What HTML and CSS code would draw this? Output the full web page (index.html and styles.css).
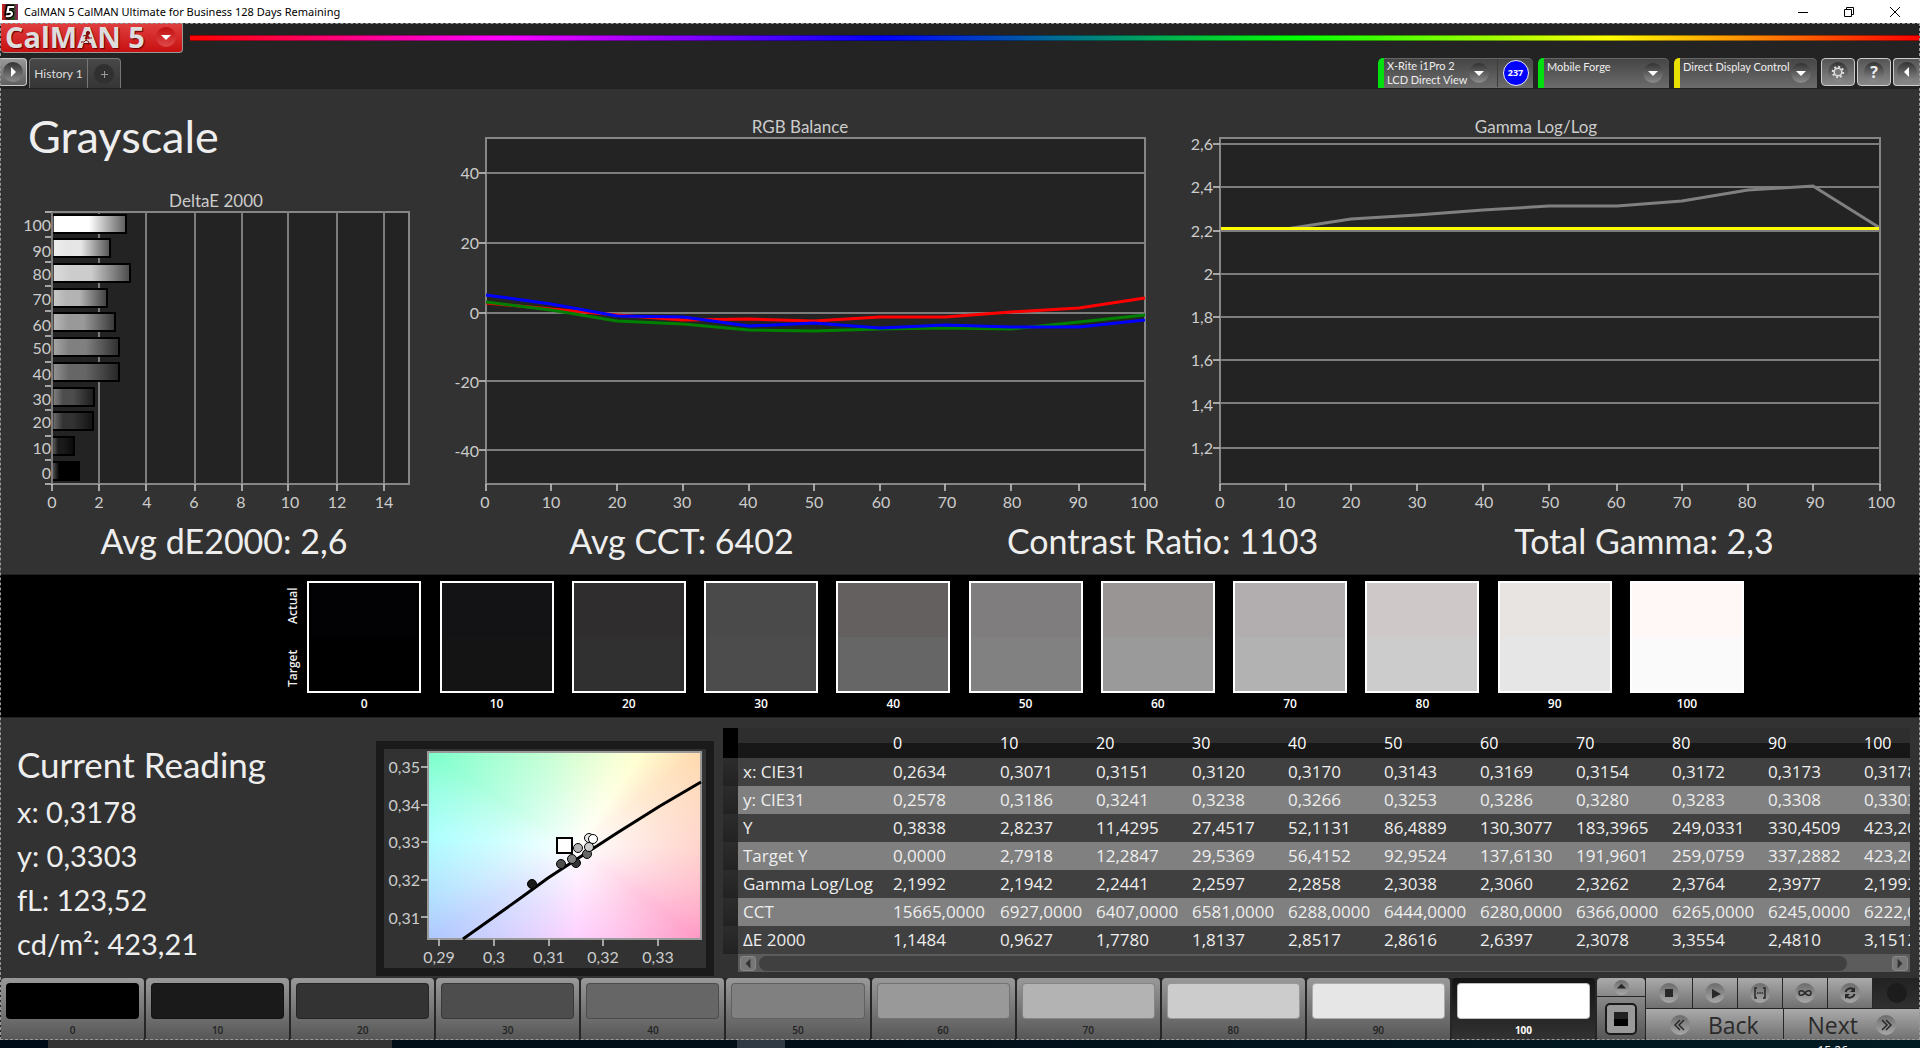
FILE: index.html
```html
<!DOCTYPE html>
<html lang="en">
<head>
<meta charset="utf-8">
<title>CalMAN 5 CalMAN Ultimate for Business 128 Days Remaining</title>
<link rel="stylesheet" href="styles.css">
</head>
<body>
<header class="titlebar">
  <svg class="titlebar-icon" viewBox="0 0 16 16" aria-hidden="true">
    <defs><linearGradient id="hue"><stop offset="0" stop-color="#e02020"/><stop offset=".35" stop-color="#402020"/><stop offset=".7" stop-color="#205020"/><stop offset="1" stop-color="#a02060"/></linearGradient></defs>
    <rect width="16" height="16" fill="url(#hue)"/>
    <path d="M12 3H6L5 8.500Q10 7 10 10Q9 13 4 12" fill="none" stroke="#000" stroke-width="4.500"/>
    <path d="M12 3H6.500L5.500 8Q10 7 10 10Q9 13 4 12" fill="none" stroke="#fff" stroke-width="2.200"/>
  </svg>
  <span class="titlebar-text">CalMAN 5 CalMAN Ultimate for Business 128 Days Remaining</span>
  <div class="window-buttons">
    <button type="button" aria-label="Minimize"><svg viewBox="0 0 12 12"><path d="M1 6.500h10"/></svg></button>
    <button type="button" aria-label="Restore"><svg viewBox="0 0 12 12"><path d="M1.500 3.500h7v7h-7zM3.500 3.500v-2h7v7h-2"/></svg></button>
    <button type="button" aria-label="Close"><svg viewBox="0 0 12 12"><path d="M1 1l10 10M11 1L1 11"/></svg></button>
  </div>
</header>

<main class="app">
  <div class="topbar">
    <div class="brand-row">
      <button type="button" class="brand" aria-label="CalMAN 5 menu">
        <span class="brand-text">CalM<span class="brand-a">A<svg class="runner" viewBox="0 0 12 14" aria-hidden="true"><circle cx="7" cy="2" r="1.600"/><path d="M2 5l4-1 2 3 3 0M6 5l-1 4 3 2-1 3M5 9l-2 2H0"/></svg></span>N 5</span>
        <span class="brand-drop"><svg viewBox="0 0 20 20" aria-hidden="true"><path d="M5 8h10l-5 5z"/></svg></span>
      </button>
      <div class="rainbow"></div>
    </div>
    <div class="tool-row">
      <button type="button" class="square-btn edge-left" aria-label="Show panel"><svg viewBox="0 0 20 20"><circle cx="10" cy="10" r="10"/><path class="glyph" d="M8 5l5 5-5 5z"/></svg></button>
      <nav class="tabs">
        <button type="button" class="tab">History 1</button>
        <button type="button" class="tab tab-add" aria-label="Add tab"><svg viewBox="0 0 20 20"><circle cx="10" cy="10" r="10"/><path d="M7 10.500h7M10.500 7v7"/></svg></button>
      </nav>
      <div class="devices">
        <div class="device device-meter">
          <button type="button" class="device-name">X-Rite i1Pro 2<br>LCD Direct View</button>
          <svg class="drop" viewBox="0 0 20 20" aria-hidden="true"><circle cx="10" cy="10" r="10"/><path class="glyph" d="M5 8h10l-5 5z"/></svg>
          <span class="count-cell"><span class="count">237</span></span>
        </div>
        <div class="device device-source">
          <select aria-label="Source"><option>Mobile Forge</option></select>
          <svg class="drop" viewBox="0 0 20 20" aria-hidden="true"><circle cx="10" cy="10" r="10"/><path class="glyph" d="M5 8h10l-5 5z"/></svg>
        </div>
        <div class="device device-display">
          <select aria-label="Display"><option>Direct Display Control</option></select>
          <svg class="drop" viewBox="0 0 20 20" aria-hidden="true"><circle cx="10" cy="10" r="10"/><path class="glyph" d="M5 8h10l-5 5z"/></svg>
        </div>
        <button type="button" class="square-btn" aria-label="Settings"><svg viewBox="0 0 20 20"><circle cx="10" cy="10" r="10"/><circle cx="10" cy="10" r="5.200" class="cog-teeth"/><circle cx="10" cy="10" r="3.800" class="cog"/></svg></button>
        <button type="button" class="square-btn" aria-label="Help"><span class="help-mark">?</span></button>
        <button type="button" class="square-btn edge-right" aria-label="Collapse panel"><svg viewBox="0 0 20 20"><circle cx="10" cy="10" r="10"/><path class="glyph" d="M12 5l-5 5 5 5z"/></svg></button>
      </div>
    </div>
  </div>

  <section class="charts">
    <div class="chart-left">
      <h1>Grayscale</h1>
      <svg class="chart" viewBox="0 190 440 325" role="img" aria-label="DeltaE 2000">
        <defs>
          <linearGradient id="shade"><stop offset="0" stop-color="#fff" stop-opacity=".3"/><stop offset=".25" stop-color="#fff" stop-opacity="0"/><stop offset=".5" stop-color="#000" stop-opacity="0"/><stop offset="1" stop-color="#000" stop-opacity=".62"/></linearGradient>
        </defs>
        <text class="chart-title" x="216" y="207" text-anchor="middle">DeltaE 2000</text>
        <rect class="plot" x="52" y="212" width="357" height="272"/>
        <path class="grid" d="M99 212v272M146 212v272M195 212v272M242 212v272M288 212v272M337 212v272M384 212v272"/>
        <path class="tick" d="M52 484v7M99 484v7M146 484v7M195 484v7M242 484v7M288 484v7M337 484v7M384 484v7M45 212h7M45 237h7M45 262h7M45 286h7M45 311h7M45 336h7M45 362h7M45 386h7M45 410h7M45 436h7M45 460h7M45 484h7"/>
        <g class="bars">
          <rect x="53" y="215" width="73" height="18" fill="#fff"/><rect x="53" y="239" width="57" height="18" fill="#e6e6e6"/><rect x="53" y="264" width="77" height="18" fill="#ccc"/><rect x="53" y="289" width="54" height="18" fill="#b3b3b3"/><rect x="53" y="313" width="62" height="18" fill="#999"/><rect x="53" y="338" width="66" height="18" fill="#808080"/><rect x="53" y="363" width="66" height="18" fill="#666"/><rect x="53" y="388" width="41" height="18" fill="#4d4d4d"/><rect x="53" y="412" width="40" height="18" fill="#333"/><rect x="53" y="437" width="21" height="18" fill="#1a1a1a"/><rect x="53" y="462" width="26" height="18" fill="#000"/>
        </g>
        <g fill="url(#shade)">
          <rect x="53" y="216" width="72" height="16"/><rect x="53" y="240" width="56" height="16"/><rect x="53" y="265" width="76" height="16"/><rect x="53" y="290" width="53" height="16"/><rect x="53" y="314" width="61" height="16"/><rect x="53" y="339" width="65" height="16"/><rect x="53" y="364" width="65" height="16"/><rect x="53" y="389" width="40" height="16"/><rect x="53" y="413" width="39" height="16"/><rect x="53" y="438" width="20" height="16"/><rect x="53" y="463" width="25" height="16"/>
        </g>
        <path class="axis" d="M52 212v272"/>
        <g text-anchor="end">
          <text x="51" y="231">100</text><text x="51" y="257">90</text><text x="51" y="280">80</text><text x="51" y="305">70</text><text x="51" y="331">60</text><text x="51" y="354">50</text><text x="51" y="380">40</text><text x="51" y="405">30</text><text x="51" y="428">20</text><text x="51" y="454">10</text><text x="51" y="479">0</text>
        </g>
        <g text-anchor="middle">
          <text x="52" y="508">0</text><text x="99" y="508">2</text><text x="147" y="508">4</text><text x="194" y="508">6</text><text x="241" y="508">8</text><text x="290" y="508">10</text><text x="337" y="508">12</text><text x="384" y="508">14</text>
        </g>
      </svg>
    </div>
    <svg class="chart chart-wide" viewBox="440 115 740 400" role="img" aria-label="RGB Balance">
      <text class="chart-title" x="800" y="133" text-anchor="middle">RGB Balance</text>
      <rect class="plot" x="486" y="138" width="659" height="346"/>
      <path class="grid" d="M486 173h659M486 243h659M486 313h659M486 381h659M486 450h659"/>
      <path class="tick" d="M479 173h7M479 243h7M479 313h7M479 381h7M479 450h7M486 484v7M551 484v7M617 484v7M683 484v7M749 484v7M814 484v7M880 484v7M945 484v7M1011 484v7M1079 484v7M1145 484v7"/>
      <polyline class="line" stroke="#f00" points="486,303 551,309 617,315 683,320 749,319 814,321 880,317 945,317 1011,312 1079,308 1145,298"/>
      <polyline class="line" stroke="#008000" points="486,302 551,310 617,321 683,324 749,330 814,331 880,329 945,328 1011,329 1079,322 1145,315"/>
      <polyline class="line" stroke="#00f" points="486,295 551,304 617,316 683,317 749,326 814,323 880,328 945,325 1011,327 1079,327 1145,320"/>
      <g text-anchor="end">
        <text x="479" y="179">40</text><text x="479" y="249">20</text><text x="479" y="319">0</text><text x="479" y="388">-20</text><text x="479" y="457">-40</text>
      </g>
      <g text-anchor="middle">
        <text x="485" y="508">0</text><text x="551" y="508">10</text><text x="617" y="508">20</text><text x="682" y="508">30</text><text x="748" y="508">40</text><text x="814" y="508">50</text><text x="881" y="508">60</text><text x="947" y="508">70</text><text x="1012" y="508">80</text><text x="1078" y="508">90</text><text x="1144" y="508">100</text>
      </g>
    </svg>
    <svg class="chart chart-wide" viewBox="1180 115 740 400" role="img" aria-label="Gamma Log/Log">
      <text class="chart-title" x="1536" y="133" text-anchor="middle">Gamma Log/Log</text>
      <rect class="plot" x="1220" y="138" width="660" height="346"/>
      <path class="grid" d="M1220 144h660M1220 187h660M1220 231h660M1220 274h660M1220 317h660M1220 360h660M1220 403h660M1220 448h660"/>
      <path class="tick" d="M1213 144h7M1213 187h7M1213 231h7M1213 274h7M1213 317h7M1213 360h7M1213 403h7M1213 448h7M1220 484v7M1286 484v7M1351 484v7M1417 484v7M1483 484v7M1549 484v7M1617 484v7M1682 484v7M1748 484v7M1813 484v7M1880 484v7"/>
      <polyline class="line" stroke="#808080" points="1220,230 1286,229 1351,219 1417,215 1483,210 1549,206 1617,206 1682,201 1748,190 1813,186 1880,228"/>
      <path class="line" stroke="#ff0" d="M1221 228.500h658"/>
      <g text-anchor="end">
        <text x="1213" y="150">2,6</text><text x="1213" y="193">2,4</text><text x="1213" y="237">2,2</text><text x="1213" y="280">2</text><text x="1213" y="323">1,8</text><text x="1213" y="366">1,6</text><text x="1213" y="411">1,4</text><text x="1213" y="454">1,2</text>
      </g>
      <g text-anchor="middle">
        <text x="1220" y="508">0</text><text x="1286" y="508">10</text><text x="1351" y="508">20</text><text x="1417" y="508">30</text><text x="1484" y="508">40</text><text x="1550" y="508">50</text><text x="1616" y="508">60</text><text x="1682" y="508">70</text><text x="1747" y="508">80</text><text x="1815" y="508">90</text><text x="1881" y="508">100</text>
      </g>
    </svg>
  </section>

  <section class="stats">
    <p>Avg dE2000: 2,6</p><p>Avg CCT: 6402</p><p>Contrast Ratio: 1103</p><p>Total Gamma: 2,3</p>
  </section>

  <section class="swatches">
    <div class="swatch-side"><span>Actual</span><span>Target</span></div>
    <figure><div class="patch p0"></div><figcaption>0</figcaption></figure>
    <figure><div class="patch p10"></div><figcaption>10</figcaption></figure>
    <figure><div class="patch p20"></div><figcaption>20</figcaption></figure>
    <figure><div class="patch p30"></div><figcaption>30</figcaption></figure>
    <figure><div class="patch p40"></div><figcaption>40</figcaption></figure>
    <figure><div class="patch p50"></div><figcaption>50</figcaption></figure>
    <figure><div class="patch p60"></div><figcaption>60</figcaption></figure>
    <figure><div class="patch p70"></div><figcaption>70</figcaption></figure>
    <figure><div class="patch p80"></div><figcaption>80</figcaption></figure>
    <figure><div class="patch p90"></div><figcaption>90</figcaption></figure>
    <figure><div class="patch p100"></div><figcaption>100</figcaption></figure>
  </section>

  <section class="details">
    <div class="reading">
      <h2>Current Reading</h2>
      <p>x: 0,3178</p><p>y: 0,3303</p><p>fL: 123,52</p><p>cd/m²: 423,21</p>
    </div>
    <div class="cie">
      <svg class="chart" viewBox="384 749 322 219" role="img" aria-label="CIE chromaticity">
        <foreignObject x="428" y="752" width="273" height="187"><div class="cie-field"></div></foreignObject>
        <rect class="frame" x="428" y="752" width="273" height="187"/>
        <path class="tick" d="M421 767h7M421 805h7M421 842h7M421 880h7M421 917h7M439 939v7M494 939v7M549 939v7M603 939v7M658 939v7"/>
        <polyline class="locus" points="463,939 494,917 522,897 548,878 577,859 617,833 660,806 701,782"/>
        <rect class="target" x="557" y="838" width="15" height="15"/>
        <g class="dots">
          <circle cx="532" cy="884" r="4.500" fill="#1a1a1a"/><circle cx="576" cy="863" r="4.500" fill="#333"/><circle cx="561" cy="864" r="4.500" fill="#4d4d4d"/><circle cx="587" cy="854" r="4.500" fill="#666"/><circle cx="572" cy="859" r="4.500" fill="#808080"/><circle cx="578" cy="848" r="4.500" fill="#b3b3b3"/><circle cx="589" cy="847" r="4.500" fill="#ccc"/><circle cx="589" cy="838" r="4.500" fill="#e6e6e6"/><circle cx="593" cy="839" r="4.500" fill="#fff"/>
        </g>
        <g text-anchor="end">
          <text x="420" y="773">0,35</text><text x="420" y="811">0,34</text><text x="420" y="848">0,33</text><text x="420" y="886">0,32</text><text x="420" y="924">0,31</text>
        </g>
        <g text-anchor="middle">
          <text x="439" y="963">0,29</text><text x="494" y="963">0,3</text><text x="549" y="963">0,31</text><text x="603" y="963">0,32</text><text x="658" y="963">0,33</text>
        </g>
      </svg>
    </div>
    <div class="readings">
      <div class="table-clip">
        <table>
          <colgroup><col class="c-gutter"><col class="c-name"><col class="c-first"><col span="10" class="c-value"></colgroup>
          <thead><tr><td></td><th></th><th>0</th><th>10</th><th>20</th><th>30</th><th>40</th><th>50</th><th>60</th><th>70</th><th>80</th><th>90</th><th>100</th></tr></thead>
          <tbody>
            <tr><td></td><th>x: CIE31</th><td>0,2634</td><td>0,3071</td><td>0,3151</td><td>0,3120</td><td>0,3170</td><td>0,3143</td><td>0,3169</td><td>0,3154</td><td>0,3172</td><td>0,3173</td><td>0,3178</td></tr>
            <tr><td></td><th>y: CIE31</th><td>0,2578</td><td>0,3186</td><td>0,3241</td><td>0,3238</td><td>0,3266</td><td>0,3253</td><td>0,3286</td><td>0,3280</td><td>0,3283</td><td>0,3308</td><td>0,3303</td></tr>
            <tr><td></td><th>Y</th><td>0,3838</td><td>2,8237</td><td>11,4295</td><td>27,4517</td><td>52,1131</td><td>86,4889</td><td>130,3077</td><td>183,3965</td><td>249,0331</td><td>330,4509</td><td>423,2082</td></tr>
            <tr><td></td><th>Target Y</th><td>0,0000</td><td>2,7918</td><td>12,2847</td><td>29,5369</td><td>56,4152</td><td>92,9524</td><td>137,6130</td><td>191,9601</td><td>259,0759</td><td>337,2882</td><td>423,2082</td></tr>
            <tr><td></td><th>Gamma Log/Log</th><td>2,1992</td><td>2,1942</td><td>2,2441</td><td>2,2597</td><td>2,2858</td><td>2,3038</td><td>2,3060</td><td>2,3262</td><td>2,3764</td><td>2,3977</td><td>2,1992</td></tr>
            <tr><td></td><th>CCT</th><td>15665,0000</td><td>6927,0000</td><td>6407,0000</td><td>6581,0000</td><td>6288,0000</td><td>6444,0000</td><td>6280,0000</td><td>6366,0000</td><td>6265,0000</td><td>6245,0000</td><td>6222,0000</td></tr>
            <tr><td></td><th>ΔE 2000</th><td>1,1484</td><td>0,9627</td><td>1,7780</td><td>1,8137</td><td>2,8517</td><td>2,8616</td><td>2,6397</td><td>2,3078</td><td>3,3554</td><td>2,4810</td><td>3,1512</td></tr>
          </tbody>
        </table>
      </div>
      <div class="scrollbar">
        <button type="button" aria-label="Scroll left"><svg viewBox="0 0 16 16"><path d="M11 2v12L5 8z"/></svg></button>
        <div class="scroll-track"><div class="scroll-thumb"></div></div>
        <button type="button" aria-label="Scroll right"><svg viewBox="0 0 16 16"><path d="M5 2v12l6-6z"/></svg></button>
      </div>
    </div>
  </section>

  <footer class="bottombar">
    <div class="levels">
      <button type="button"><span class="chip l0"></span>0</button>
      <button type="button"><span class="chip l10"></span>10</button>
      <button type="button"><span class="chip l20"></span>20</button>
      <button type="button"><span class="chip l30"></span>30</button>
      <button type="button"><span class="chip l40"></span>40</button>
      <button type="button"><span class="chip l50"></span>50</button>
      <button type="button"><span class="chip l60"></span>60</button>
      <button type="button"><span class="chip l70"></span>70</button>
      <button type="button"><span class="chip l80"></span>80</button>
      <button type="button"><span class="chip l90"></span>90</button>
      <button type="button" class="selected" aria-pressed="true"><span class="chip l100"></span>100</button>
    </div>
    <div class="pattern">
      <button type="button" class="pattern-up" aria-label="Expand patterns"><svg viewBox="0 0 20 20"><circle cx="10" cy="10" r="8"/><path class="ink" d="M5 11h10l-5-5z"/></svg></button>
      <button type="button" class="pattern-window" aria-label="Pattern window"><span></span></button>
    </div>
    <div class="controls">
      <div class="transport">
        <button type="button" aria-label="Stop"><svg viewBox="0 0 20 20"><circle cx="10" cy="10" r="10"/><path class="ink" d="M6 6h8v8H6z"/></svg></button>
        <button type="button" aria-label="Read"><svg viewBox="0 0 20 20"><circle cx="10" cy="10" r="10"/><path class="ink" d="M7 6l9 5-9 4.500z"/></svg></button>
        <button type="button" aria-label="Read series"><svg viewBox="0 0 20 20"><circle cx="10" cy="10" r="10"/><path class="pen" d="M7 5H5v10h2M13 5h2v10h-2M7 10h1.500M9.300 10h1.500M11.600 10h1.500"/></svg></button>
        <button type="button" aria-label="Read continuously"><svg viewBox="0 0 20 20"><circle cx="10" cy="10" r="10"/><path class="pen" d="M10 10C8.500 7.500 4 6.500 4 10s4.500 2.500 6 0 6-3.500 6 0-4.500 2.500-6 0"/></svg></button>
        <button type="button" aria-label="Refresh"><svg viewBox="0 0 20 20"><circle cx="10" cy="10" r="10"/><path class="pen thick" d="M5.500 9A5 5 0 0 1 13.500 6.500M14.500 11A5 5 0 0 1 6.500 13.500"/><path class="ink" d="M15 4v5h-5zM5 16v-5h5z"/></svg></button>
        <button type="button" class="off" aria-label="Status" disabled><svg viewBox="0 0 20 20"><circle cx="10" cy="10" r="10"/></svg></button>
      </div>
      <div class="steps">
        <button type="button"><svg viewBox="0 0 20 20" aria-hidden="true"><circle cx="10" cy="10" r="10"/><path class="pen" d="M10 5l-5 5 5 5M14 5l-5 5 5 5"/></svg>Back</button>
        <button type="button">Next<svg viewBox="0 0 20 20" aria-hidden="true"><circle cx="10" cy="10" r="10"/><path class="pen" d="M6 5l5 5-5 5M10 5l5 5-5 5"/></svg></button>
      </div>
    </div>
  </footer>
</main>
<div class="taskbar"><span class="clock">15:26</span></div>

<svg class="defs" aria-hidden="true"><defs>
  <linearGradient id="knobDark" x2="0" y2="1"><stop offset="0" stop-color="#333"/><stop offset="1" stop-color="#8c8c8c"/></linearGradient>
  <linearGradient id="knobLight" x2="0" y2="1"><stop offset="0" stop-color="#6c6c6c"/><stop offset="1" stop-color="#a8a8a8"/></linearGradient>
</defs></svg>
</body>
</html>
```
FILE: styles.css
```css
* { box-sizing: border-box; }
body {
  margin: 0;
  min-height: 100vh;
  display: flex;
  flex-direction: column;
  background: #323232;
  color: #eee;
  font-family: "Open Sans", "Noto Sans", sans-serif;
  font-size: 12px;
  overflow: hidden;
}
h1, h2, p, figure { margin: 0; font-weight: 400; }
button, select { font: inherit; color: inherit; border: 0; padding: 0; background: none; }
svg { display: block; }
.defs { position: absolute; width: 0; height: 0; }

/* Window title */
.titlebar { display: flex; align-items: center; height: 23px; background: #fff; color: #000; }
.titlebar-icon { width: 16px; height: 16px; margin: 0 6px 0 2px; }
.titlebar-text { font-family: "Noto Sans", sans-serif; font-size: 11px; line-height: 20px; }
.window-buttons { margin-left: auto; display: flex; padding-right: 2px; }
.window-buttons button { width: 46px; height: 20px; display: grid; place-items: center; }
.window-buttons svg { width: 12px; height: 12px; fill: none; stroke: #000; }

/* Header */
.app { flex: 1; display: flex; flex-direction: column; outline: 1px dashed #999; outline-offset: -1px; }
.topbar { background: #232323; height: 66px; border-bottom: 1px solid #202020; }
.brand-row { display: flex; height: 30px; margin-bottom: 5px; gap: 7px; padding-left: 1px; }
.brand {
  width: 182px;
  display: flex;
  align-items: center;
  justify-content: space-between;
  padding: 0 6px 2px 4px;
  background: linear-gradient(#e04040, #c81010);
  border: solid #999;
  border-width: 0 1px 1px 0;
  border-radius: 0 0 4px 4px;
}
.brand-text {
  font-size: 29px;
  line-height: 26px;
  font-weight: 700;
  color: #ddd;
  text-shadow: 1px 1px 1px #600;
  white-space: nowrap;
}
.brand-a { position: relative; }
.runner { position: absolute; left: 4px; top: 14px; width: 12px; height: 14px; fill: #801010; stroke: #801010; stroke-width: 1; }
.runner path { fill: none; }
.brand-drop { width: 20px; height: 20px; border-radius: 50%; background: linear-gradient(#c01010, #e04848); }
.brand-drop svg { fill: #fff; }
.rainbow { flex: 1; height: 6px; margin-top: 12px; border: solid rgba(0, 0, 0, .4); border-width: 1px 0; background: linear-gradient(90deg, #f00, #f0f 18%, #00f 40%, #0f0 64%, #ff0 82%, #f00); }
.tool-row { display: flex; height: 30px; }
.square-btn {
  width: 34px;
  height: 28px;
  display: grid;
  place-items: center;
  border: 1px solid #ccc;
  border-radius: 4px;
  background: linear-gradient(#555, #888);
}
.square-btn svg, .tab svg { width: 20px; height: 20px; }
.square-btn circle, .drop circle { fill: url(#knobDark); }
.glyph { fill: #fff; }
.square-btn .cog { fill: #777; stroke: #ddd; stroke-width: 1.500px; }
.square-btn .cog-teeth { fill: none; stroke: #ddd; stroke-width: 2px; stroke-dasharray: 2 2; }
.help-mark { width: 20px; height: 20px; border-radius: 50%; background: linear-gradient(#333, #8c8c8c); font-family: "Open Sans", sans-serif; font-size: 16px; line-height: 20px; font-weight: 700; }
.edge-left { width: 27px; border-left: 0; border-radius: 0 4px 4px 0; background: linear-gradient(#999, #606060); }
.edge-right { width: 27px; border-right: 0; border-radius: 4px 0 0 4px; }
.tabs { display: flex; margin-left: 2px; border: 1px solid #777; border-bottom: 0; border-radius: 4px 4px 0 0; background: linear-gradient(#484848, #353535); }
.tab { width: 57px; font-family: Lato, sans-serif; font-size: 12px; white-space: nowrap; color: #ddd; }
.tab-add { width: 33px; border-left: 1px solid #777; display: grid; place-items: center; }
.tab-add circle { fill: #303030; }
.tab-add path { stroke: #999; fill: none; }
.devices { margin-left: auto; display: flex; gap: 2px; font-family: Lato, sans-serif; font-size: 11px; }
.device { display: flex; align-items: center; border-left: 6px solid #00e010; border-radius: 5px 5px 0 0; margin-right: 3px; background: linear-gradient(#444, #6c6c6c); box-shadow: inset 0 1px #666; }
.device-meter { width: 155px; }
.device-source { width: 131px; }
.device-display { width: 143px; border-left-color: #e8e000; margin-right: 2px; }
.device-name { flex: 1; min-width: 0; padding: 0 0 0 3px; text-align: left; line-height: 14px; white-space: nowrap; }
.device select { flex: 1; min-width: 0; height: 30px; padding: 0 0 14px 3px; appearance: none; text-overflow: clip; }
.drop { width: 20px; height: 20px; margin-right: 6px; flex: none; }
.device-meter .drop { margin-right: 8px; }
.device-display select { margin-right: -12px; }
.count-cell { width: 36px; height: 28px; display: grid; place-items: center; border-left: 1px solid #3c3c3c; }
.count { width: 26px; height: 26px; border: 1px solid #eee; border-radius: 50%; background: #00f; color: #fff; font-family: "Open Sans", sans-serif; font-size: 9px; line-height: 24px; font-weight: 700; text-align: center; }

/* Charts */
.charts { display: grid; grid-template-columns: 440fr 740fr 740fr; align-items: end; padding-top: 23px; }
.chart { width: 100%; height: auto; }
.chart text { font-family: Lato, sans-serif; font-size: 16px; fill: #ccc; }
.chart .chart-title { font-size: 17px; }
h1 { padding-left: 28px; font-family: Lato, sans-serif; font-size: 45px; line-height: 48px; margin-bottom: 30px; }
.plot { fill: #232323; stroke: #868686; stroke-width: 2px; }
.frame { fill: none; stroke: #999; stroke-width: 2px; }
.grid, .axis { fill: none; stroke: #7c7c7c; stroke-width: 2px; }
.tick { fill: none; stroke: #ccc; stroke-width: 1.500px; }
.bars rect { stroke: #000; stroke-width: 2px; }
.line { fill: none; stroke-width: 3px; }
.stats { display: grid; grid-template-columns: 448fr 467fr 495fr 468fr 42fr; height: 59px; font-family: Lato, sans-serif; font-size: 34px; line-height: 52px; text-align: center; white-space: nowrap; }

/* Target and actual swatches */
.swatches { display: flex; justify-content: space-between; height: 144px; padding: 6px 176px 0 283px; background: #000; border: solid #222; border-width: 1px 0; }
.swatch-side { width: 20px; height: 112px; margin-right: -14px; padding: 6px 0; display: flex; flex-direction: row-reverse; justify-content: space-between; writing-mode: vertical-rl; transform: rotate(180deg); line-height: 20px; font-weight: 600; text-align: center; }
.swatches figure { text-align: center; }
.patch { width: 114px; height: 112px; border: 2px solid #fff; }
.swatches figcaption { line-height: 22px; font-size: 12px; font-weight: 600; color: #fff; }
.p0 { background: linear-gradient(#020204 50%, #000 50%); }
.p10 { background: linear-gradient(#131315 50%, #141414 50%); }
.p20 { background: linear-gradient(#302d2e 50%, #303030 50%); }
.p30 { background: linear-gradient(#4a4a4a 50%, #4c4c4c 50%); }
.p40 { background: linear-gradient(#656060 50%, #666 50%); }
.p50 { background: linear-gradient(#7f7d7d 50%, #818181 50%); }
.p60 { background: linear-gradient(#999594 50%, #9a9a9a 50%); }
.p70 { background: linear-gradient(#b2aeaf 50%, #b2b2b2 50%); }
.p80 { background: linear-gradient(#cec8c8 50%, #ccc 50%); }
.p90 { background: linear-gradient(#e8e4e1 50%, #e6e6e6 50%); }
.p100 { background: linear-gradient(#fff8f6 50%, #fafafa 50%); }

/* Readings */
.details { flex: 1; display: grid; grid-template-columns: 376fr 338fr 1196fr; padding-right: 10px; align-items: start; }
.reading { padding: 24px 0 0 17px; font-family: Lato, sans-serif; font-size: 29px; line-height: 44px; white-space: nowrap; }
.reading h2 { font-size: 35px; line-height: 44px; margin-bottom: 4px; }
.cie { margin-top: 23px; border: 8px solid #1a1a1a; }
.cie-field {
  height: 100%;
  background:
    radial-gradient(ellipse 190px 140px at 150px 95px, #fff, rgba(255, 255, 255, .5) 45%, rgba(255, 255, 255, 0)),
    conic-gradient(from 0deg at 150px 95px, #ccffc0, #f0ffc4 22deg, #ffffc0 34deg, #ffd8a8 52deg, #ffc0b4 90deg, #ff90c0 127deg, #ffa8e0 152deg, #ffbcff 180deg, #d4c0ff 210deg, #b0c8ff 238deg, #98ffff 274deg, #80ffcc 302deg, #a4ffc4 335deg, #ccffc0);
}
.locus { fill: none; stroke: #000; stroke-width: 3px; }
.target { fill: #fff; stroke: #000; stroke-width: 2px; }
.dots circle { stroke: #000; stroke-width: 1px; }
.readings { margin: 10px 0 0 9px; min-width: 0; }
.table-clip { overflow: hidden; }
table { width: 1232px; table-layout: fixed; border-collapse: collapse; }
.c-gutter { width: 15px; }
.c-name { width: 150px; }
.c-first { width: 107px; }
.c-value { width: 96px; }
th, td { padding: 0 0 0 5px; text-align: left; font-weight: 400; font-size: 17px; line-height: 28px; white-space: nowrap; }
thead tr { background: linear-gradient(#2e2e2e 50%, #171717 50%); }
thead th { font-size: 16px; line-height: 30px; color: #fff; }
thead td:first-child { background: #000; }
tbody tr { background: #404040; }
tbody tr:nth-child(even) { background: #808080; }
tbody td:first-child { background: linear-gradient(#2c2c2c, #222); }
.scrollbar { display: flex; align-items: center; height: 18px; margin-left: 15px; padding: 0 2px; gap: 3px; background: #5c5c5c; }
.scrollbar button { width: 16px; height: 15px; border: 1px solid #888; border-radius: 3px; background: #777; }
.scrollbar svg { width: 14px; height: 13px; fill: #333; }
.scroll-track { flex: 1; padding-right: 42px; }
.scroll-thumb { height: 15px; border-radius: 8px; background: #404040; }

/* Bottom controls */
.bottombar { display: flex; height: 62px; background: #262626; }
.levels { flex: 1; display: grid; grid-template-columns: repeat(11, 1fr); gap: 2px; padding: 0 2px 0 1px; }
.levels button { display: flex; flex-direction: column; align-items: center; padding: 5px 5px 0; border-radius: 4px; background: linear-gradient(#999, #555); color: #222; font-size: 10px; line-height: 22px; font-weight: 600; text-align: center; }
.chip { align-self: stretch; height: 36px; border: 1px solid rgba(0, 0, 0, .25); border-radius: 4px; }
.levels .selected { background: linear-gradient(#141414, #333); color: #fff; font-weight: 700; }
.l0 { background: #000; } .l10 { background: #1a1a1a; } .l20 { background: #333; } .l30 { background: #4d4d4d; }
.l40 { background: #666; } .l50 { background: #808080; } .l60 { background: #999; } .l70 { background: #b3b3b3; }
.l80 { background: #ccc; } .l90 { background: #e6e6e6; } .l100 { background: #fff; }
.pattern { width: 48px; display: flex; flex-direction: column; gap: 1px; border-radius: 4px; overflow: hidden; }
.pattern button { display: grid; place-items: center; }
.pattern-up { height: 18px; background: linear-gradient(#aaa, #888); }
.pattern-up svg { width: 19px; height: 19px; }
.pattern-window { flex: 1; background: linear-gradient(#888, #555); }
.pattern-window span { width: 32px; height: 32px; border: 2px solid #1a1a1a; border-radius: 5px; background: linear-gradient(#222 50%, #000 50%) center / 14px 14px no-repeat, #999; }
.controls { width: 274px; margin-left: 1px; display: grid; grid-template-rows: 30px 31px; gap: 1px; }
.transport { display: grid; grid-template-columns: 46fr 44fr 44fr 44fr 44fr 47fr; gap: 1px; }
.steps { display: grid; grid-template-columns: 1fr 1fr; gap: 1px; }
.controls button { display: flex; align-items: center; justify-content: center; background: linear-gradient(#aaa, #707070); color: #2a2a2a; }
.controls svg { width: 20px; height: 20px; }
.bottombar circle { fill: url(#knobLight); }
.ink { fill: #282828; }
.pen { fill: none; stroke: #282828; stroke-width: 1.500px; }
.thick { stroke-width: 2px; }
.controls .off { background: linear-gradient(#222, #303030); }
.bottombar .off circle { fill: #1c1c1c; }
.steps button { gap: 18px; font-size: 23px; line-height: 30px; }

/* Strip of the system taskbar */
.taskbar { height: 8px; overflow: hidden; display: flex; justify-content: flex-end; padding-right: 72px; background: linear-gradient(90deg, #000d18 48px, #333 48px 392px, #020e18 392px 737px, #303a44 737px 785px, #020e18 785px, #021c24); color: #fff; }
.clock { font-size: 12px; line-height: 18px; padding-top: 2px; }
```
